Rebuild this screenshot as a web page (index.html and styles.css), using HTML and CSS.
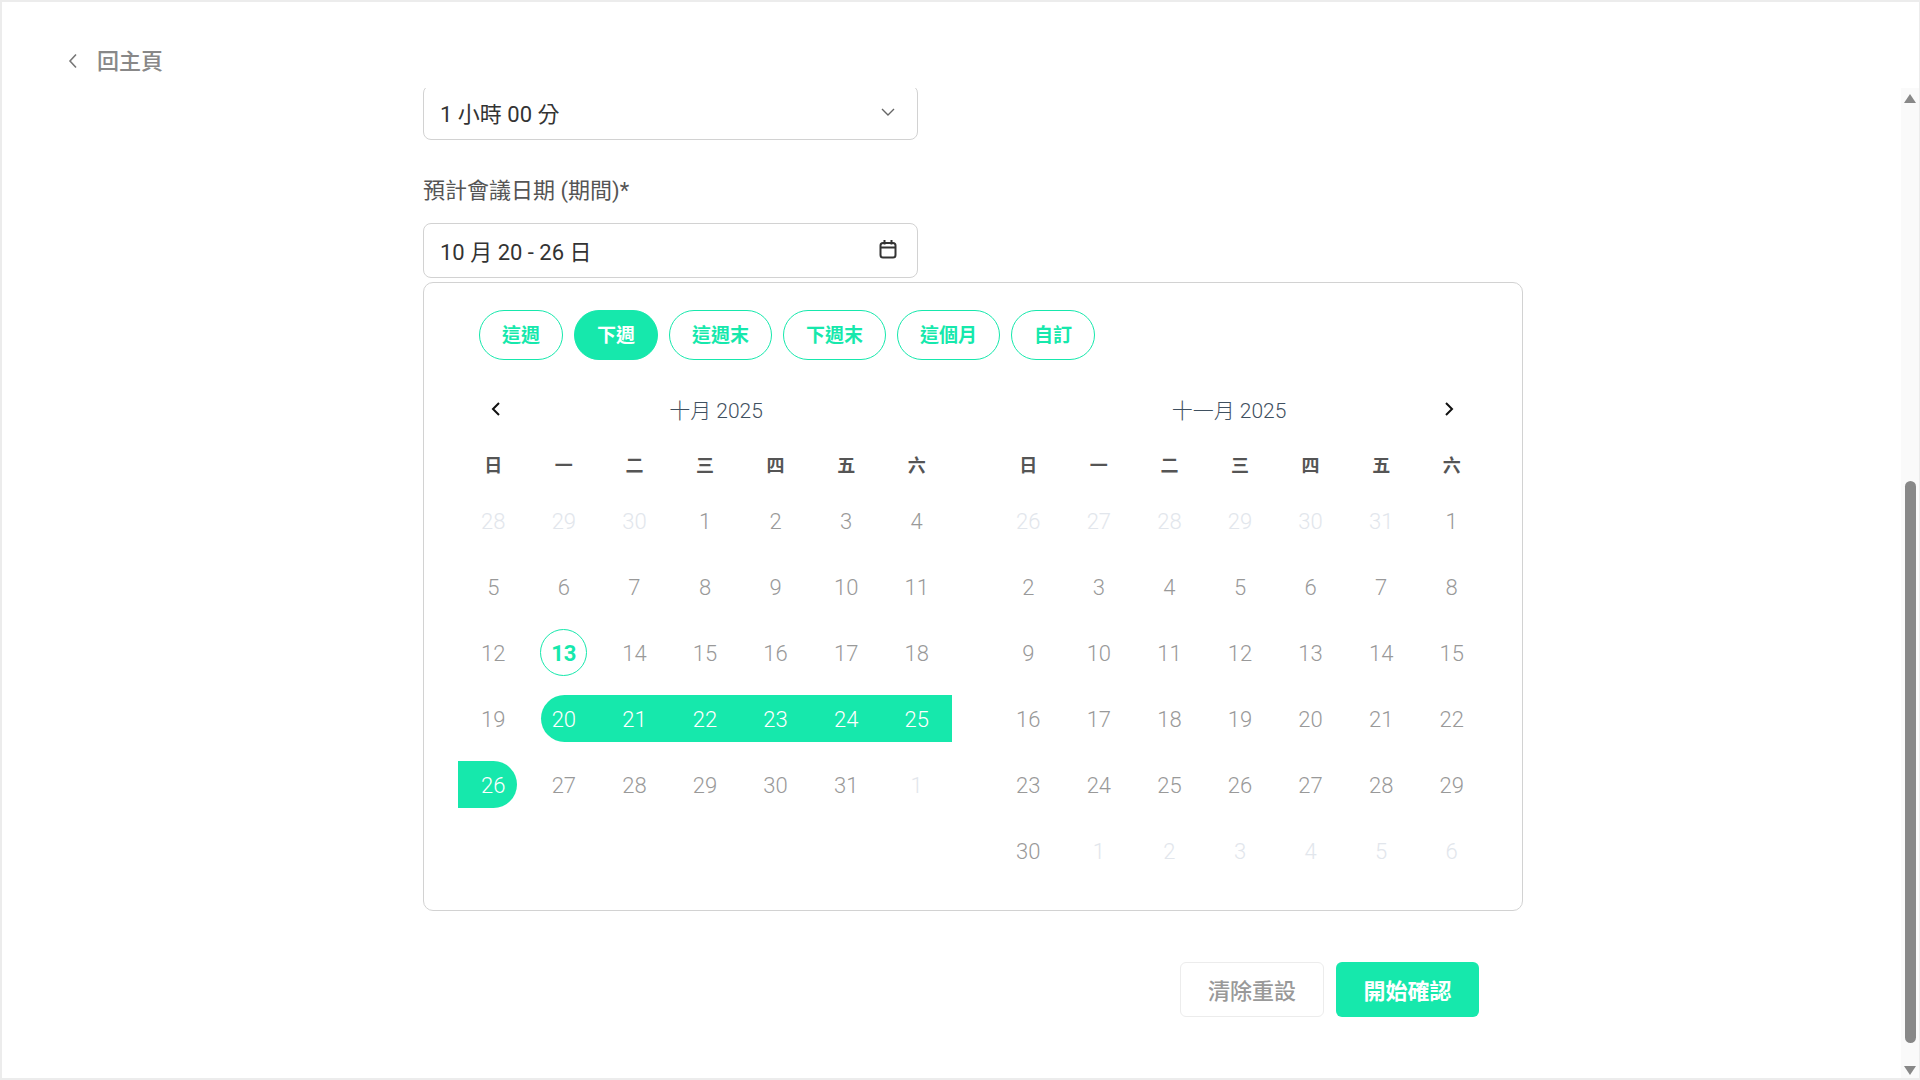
FILE: index.html
```html
<!DOCTYPE html>
<html lang="zh-TW">
<head>
    <meta charset="UTF-8">
    <title>預計會議日期</title>
    <link rel="stylesheet" href="styles.css">
</head>
<body>
    <div class="window">
        <div class="top-bar">
            <a class="back-link" href="#">
                <svg class="back-icon" viewBox="0 0 10 16"><path d="M8 1.5 2 8l6 6.5"/></svg>
                回主頁
            </a>
        </div>

        <div class="main">
            <div class="scroll-area">
                <div class="form">
                    <div class="field field-cut">
                        <span>1 小時 00 分</span>
                        <svg class="chevron-icon" viewBox="0 0 14 8"><path d="M1 1l6 6 6-6"/></svg>
                    </div>

                    <label class="field-label">預計會議日期 (期間)*</label>
                    <div class="field">
                        <span>10 月 20 - 26 日</span>
                        <svg class="calendar-icon" viewBox="0 0 18 20">
                            <rect x="1.5" y="4" width="15" height="14.5" rx="2.5"/>
                            <path d="M1.5 8.5h15M5.5 1v4.5M12.5 1v4.5"/>
                        </svg>
                    </div>

                    <div class="picker">
                        <div class="pills">
                            <button class="pill">這週</button>
                            <button class="pill active">下週</button>
                            <button class="pill">這週末</button>
                            <button class="pill">下週末</button>
                            <button class="pill">這個月</button>
                            <button class="pill">自訂</button>
                        </div>

                        <div class="months">
                            <div class="month">
                                <div class="month-head">
                                    <svg class="nav-icon" viewBox="0 0 10 16"><path d="M8 2 2 8l6 6"/></svg>
                                    <div class="month-title">十月 2025</div>
                                </div>
                                <div class="weekdays">
                                    <span>日</span><span>一</span><span>二</span><span>三</span><span>四</span><span>五</span><span>六</span>
                                </div>
                                <div class="days">
                                    <span class="day muted">28</span><span class="day muted">29</span><span class="day muted">30</span><span class="day">1</span><span class="day">2</span><span class="day">3</span><span class="day">4</span>
                                    <span class="day">5</span><span class="day">6</span><span class="day">7</span><span class="day">8</span><span class="day">9</span><span class="day">10</span><span class="day">11</span>
                                    <span class="day">12</span><span class="day today">13</span><span class="day">14</span><span class="day">15</span><span class="day">16</span><span class="day">17</span><span class="day">18</span>
                                    <span class="day">19</span><span class="day range range-start">20</span><span class="day range">21</span><span class="day range">22</span><span class="day range">23</span><span class="day range">24</span><span class="day range">25</span>
                                    <span class="day range range-end">26</span><span class="day">27</span><span class="day">28</span><span class="day">29</span><span class="day">30</span><span class="day">31</span><span class="day muted">1</span>
                                </div>
                            </div>

                            <div class="month">
                                <div class="month-head">
                                    <div class="month-title">十一月 2025</div>
                                    <svg class="nav-icon" viewBox="0 0 10 16"><path d="M2 2l6 6-6 6"/></svg>
                                </div>
                                <div class="weekdays">
                                    <span>日</span><span>一</span><span>二</span><span>三</span><span>四</span><span>五</span><span>六</span>
                                </div>
                                <div class="days">
                                    <span class="day muted">26</span><span class="day muted">27</span><span class="day muted">28</span><span class="day muted">29</span><span class="day muted">30</span><span class="day muted">31</span><span class="day">1</span>
                                    <span class="day">2</span><span class="day">3</span><span class="day">4</span><span class="day">5</span><span class="day">6</span><span class="day">7</span><span class="day">8</span>
                                    <span class="day">9</span><span class="day">10</span><span class="day">11</span><span class="day">12</span><span class="day">13</span><span class="day">14</span><span class="day">15</span>
                                    <span class="day">16</span><span class="day">17</span><span class="day">18</span><span class="day">19</span><span class="day">20</span><span class="day">21</span><span class="day">22</span>
                                    <span class="day">23</span><span class="day">24</span><span class="day">25</span><span class="day">26</span><span class="day">27</span><span class="day">28</span><span class="day">29</span>
                                    <span class="day">30</span><span class="day muted">1</span><span class="day muted">2</span><span class="day muted">3</span><span class="day muted">4</span><span class="day muted">5</span><span class="day muted">6</span>
                                </div>
                            </div>
                        </div>
                    </div>

                    <div class="actions">
                        <button class="btn btn-reset">清除重設</button>
                        <button class="btn btn-confirm">開始確認</button>
                    </div>
                </div>
            </div>

            <div class="scrollbar">
                <div class="arrow-up"></div>
                <div class="track"><div class="thumb"></div></div>
                <div class="arrow-down"></div>
            </div>
        </div>
    </div>
</body>
</html>
```

FILE: styles.css
```css
* {
    box-sizing: border-box;
}
body {
    margin: 0;
    background-color: white;
    font-family: Roboto, "Noto Sans CJK TC", sans-serif;
    color: #333;
}
svg {
    fill: none;
    stroke: currentColor;
    display: block;
}
.window {
    height: 1080px;
    border: 2px solid #ececec;
    border-width: 2px 1px 2px 2px;
    display: flex;
    flex-direction: column;
}
.top-bar {
    height: 86px;
    flex-shrink: 0;
    padding: 45px 0 0 66px;
}
.back-link {
    display: flex;
    align-items: center;
    color: #888;
    font-size: 22px;
    font-weight: 500;
    line-height: 30px;
    text-decoration: none;
}
.back-icon {
    width: 10px;
    height: 16px;
    margin-right: 19px;
    margin-top: -2px;
    stroke-width: 1.6;
    color: #777;
}
.main {
    flex: 1;
    display: flex;
    min-height: 0;
}
.scroll-area {
    flex: 1;
    overflow: hidden;
    padding-left: 421px;
}
.form {
    width: 1100px;
}
.field {
    width: 495px;
    height: 55px;
    border: 1px solid #d2d2d2;
    border-radius: 8px;
    padding: 0 22px 2px 16px;
    display: flex;
    align-items: center;
    justify-content: space-between;
    font-size: 22px;
    color: #333;
}
.field-cut {
    margin-top: -3px;
}
.field-label {
    display: block;
    margin: 36px 0 17px;
    font-size: 22px;
    line-height: 30px;
    color: #555;
}
.chevron-icon {
    width: 14px;
    height: 8px;
    stroke-width: 1.4;
    color: #666;
}
.calendar-icon {
    width: 18px;
    height: 20px;
    stroke-width: 2;
    color: #333;
    margin-top: -2px;
    margin-right: -2px;
}
.picker {
    margin-top: 4px;
    height: 629px;
    border: 1px solid #d2d2d2;
    border-radius: 10px;
    padding: 27px 35px 0 34px;
}
.pills {
    display: flex;
    gap: 11px;
    padding-left: 21px;
}
.pill {
    height: 50px;
    padding: 0 22px 3px;
    border: 1px solid #16e8ac;
    border-radius: 25px;
    background-color: white;
    color: #16e8ac;
    font-family: inherit;
    font-size: 19px;
    font-weight: 700;
}
.pill.active {
    background-color: #16e8ac;
    color: white;
}
.months {
    display: flex;
    gap: 41px;
    margin-top: 36px;
}
.month {
    width: 494px;
}
.month-head {
    display: flex;
    align-items: center;
    padding: 0 27px;
    height: 30px;
}
.month-title {
    flex: 1;
    text-align: center;
    font-size: 21px;
    font-weight: 300;
    line-height: 30px;
    color: #3f5060;
}
.nav-icon {
    width: 22px;
    height: 16px;
    color: #111;
    stroke-width: 2;
    margin-top: -4px;
}
.weekdays {
    display: grid;
    grid-template-columns: repeat(7, 1fr);
    margin-top: 28px;
    font-size: 18px;
    font-weight: 700;
    line-height: 24px;
    text-align: center;
    color: #555;
}
.days {
    display: grid;
    grid-template-columns: repeat(7, 1fr);
    row-gap: 19px;
    margin-top: 19px;
}
.day {
    height: 47px;
    padding-top: 2px;
    display: flex;
    align-items: center;
    justify-content: center;
    font-size: 22px;
    font-weight: 300;
    color: #999;
}
.day.muted {
    color: #e2e6ec;
}
.day.today {
    width: 47px;
    justify-self: center;
    border: 1px solid #16e8ac;
    border-radius: 50%;
    color: #16e8ac;
    font-weight: 700;
}
.day.range {
    background-color: #16e8ac;
    color: white;
}
.range-start {
    margin-left: 12px;
    padding-right: 12px;
    border-radius: 24px 0 0 24px;
}
.range-end {
    margin-right: 12px;
    padding-left: 12px;
    border-radius: 0 24px 24px 0;
}
.actions {
    display: flex;
    justify-content: flex-end;
    gap: 12px;
    margin-top: 51px;
    padding-right: 44px;
}
.btn {
    height: 55px;
    width: 144px;
    padding-bottom: 2px;
    border-radius: 6px;
    font-family: inherit;
    font-size: 22px;
}
.btn-reset {
    border: 1px solid #ececec;
    background-color: white;
    color: #999;
    font-weight: 500;
}
.btn-confirm {
    width: 143px;
    border: none;
    background-color: #16e8ac;
    color: white;
    font-weight: 700;
}
.scrollbar {
    width: 18px;
    flex-shrink: 0;
    background-color: #fafafa;
    display: flex;
    flex-direction: column;
    align-items: center;
    padding: 6px 0 3px;
}
.arrow-up {
    border: 6px solid transparent;
    border-top: 0;
    border-bottom: 9px solid #888;
}
.arrow-down {
    border: 6px solid transparent;
    border-bottom: 0;
    border-top: 9px solid #888;
}
.track {
    flex: 1;
    width: 100%;
    display: flex;
    justify-content: center;
}
.thumb {
    width: 11px;
    height: 562px;
    margin-top: 378px;
    background-color: #888;
    border-radius: 6px;
}
```
